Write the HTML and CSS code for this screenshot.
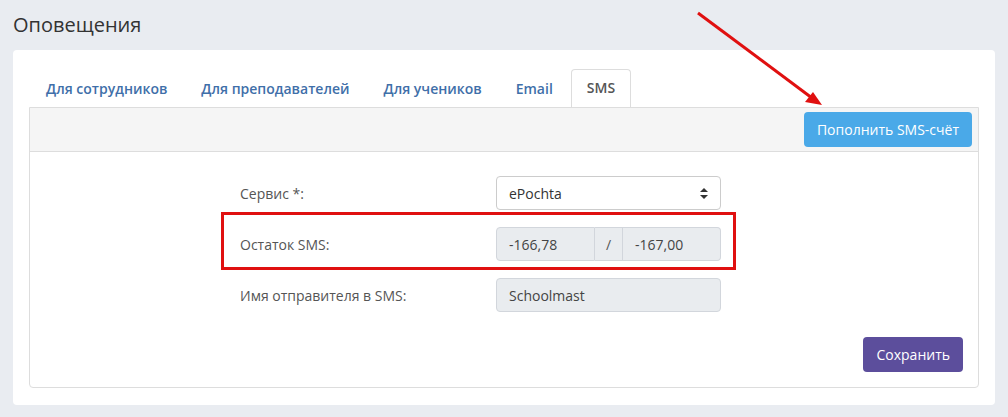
FILE: index.html
```html
<!DOCTYPE html>
<html lang="ru">
<head>
  <meta charset="UTF-8">
  <title>Оповещения</title>
  <link rel="stylesheet" href="styles.css">
</head>
<body>
  <div class="page">
    <h1 class="page-title">Оповещения</h1>
    <div class="card">
      <ul class="tabs">
        <li class="tab">Для сотрудников</li>
        <li class="tab">Для преподавателей</li>
        <li class="tab">Для учеников</li>
        <li class="tab">Email</li>
        <li class="tab active">SMS</li>
      </ul>
      <div class="panel">
        <div class="toolbar">
          <button class="btn btn-blue">Пополнить SMS-счёт</button>
        </div>
        <div class="form">
          <div class="form-row">
            <label class="form-label">Сервис *:</label>
            <div class="select">
              <span>ePochta</span>
              <svg class="select-arrow" width="8" height="11" viewBox="0 0 8 11">
                <path d="M4 0 L8 4 L0 4 Z M0 7 L8 7 L4 11 Z" fill="#333"/>
              </svg>
            </div>
          </div>
          <div class="form-row">
            <label class="form-label">Остаток SMS:</label>
            <div class="input-group">
              <div class="input readonly first">-166,78</div>
              <div class="addon">/</div>
              <div class="input readonly last">-167,00</div>
            </div>
          </div>
          <div class="form-row">
            <label class="form-label">Имя отправителя в SMS:</label>
            <div class="input readonly">Schoolmast</div>
          </div>
        </div>
        <div class="panel-footer">
          <button class="btn btn-purple">Сохранить</button>
        </div>
      </div>
    </div>

    <!-- пометки поверх скриншота -->
    <div class="mark-box"></div>
    <svg class="mark-arrow" width="1008" height="417" viewBox="0 0 1008 417">
      <line x1="698" y1="13" x2="812" y2="98" stroke="#e01010" stroke-width="3"/>
      <path d="M822 105 L805 102 L813 92 Z" fill="#e01010"/>
    </svg>
  </div>
</body>
</html>
```

FILE: styles.css
```css
body {
  margin: 0;
  padding: 0;
  font-family: "Open Sans", "Liberation Sans", sans-serif;
  background-color: #e9ecf1;
  color: #555;
}
.page {
  position: relative;
  width: 1008px;
  height: 417px;
  padding: 0 13px 13px;
  box-sizing: border-box;
}
.page-title {
  margin: 0;
  height: 50px;
  line-height: 50px;
  font-size: 20px;
  font-weight: 400;
  color: #333;
}
.card {
  background: #fff;
  border-radius: 4px;
  padding: 19px 16px 17px;
}
.tabs {
  list-style: none;
  margin: 0;
  padding: 0 0 0 1px;
  display: flex;
  gap: 2px;
  height: 38px;
}
.tab {
  padding: 0 15px;
  line-height: 38px;
  font-size: 14px;
  font-weight: 600;
  color: #3f6fa9;
  border: 1px solid transparent;
  border-bottom: none;
  border-radius: 4px 4px 0 0;
}
.tab.active {
  color: #555;
  border-color: #ddd;
  background: #fff;
  line-height: 36px;
}
.panel {
  border: 1px solid #ddd;
  border-radius: 0 0 4px 4px;
}
.toolbar {
  display: flex;
  justify-content: flex-end;
  padding: 4px 6px 4px;
  background: #f5f5f5;
  border-bottom: 1px solid #ddd;
}
.btn {
  border: none;
  border-radius: 4px;
  height: 35px;
  padding: 0 13px;
  font-family: inherit;
  font-size: 14px;
  color: #fff;
  cursor: pointer;
}
.btn-blue {
  background: #4aa9e8;
}
.btn-purple {
  background: #5c4e9c;
}
.form {
  padding: 24px 0 0 210px;
  display: flex;
  flex-direction: column;
  gap: 17px;
}
.form-row {
  display: flex;
  align-items: center;
  height: 34px;
}
.form-label {
  width: 256px;
  font-size: 14px;
  color: #555;
}
.select, .input, .input-group {
  width: 225px;
  height: 34px;
  box-sizing: border-box;
}
.select {
  display: flex;
  align-items: center;
  justify-content: space-between;
  padding: 0 12px;
  border: 1px solid #ccc;
  border-radius: 4px;
  font-size: 14px;
  color: #333;
}
.select-arrow {
  margin-top: 1px;
}
.input {
  display: flex;
  align-items: center;
  padding: 0 12px;
  border: 1px solid #d2d6dc;
  border-radius: 4px;
  font-size: 14px;
  color: #444;
}
.input.readonly {
  background: #e9ecef;
}
.input-group {
  display: flex;
}
.input-group .input {
  width: auto;
  flex: 1;
}
.input-group .first {
  border-radius: 4px 0 0 4px;
  width: 99px;
  flex: none;
}
.input-group .last {
  border-radius: 0 4px 4px 0;
  border-left: none;
}
.addon {
  width: 27px;
  display: flex;
  align-items: center;
  justify-content: center;
  background: #e9ecef;
  border: 1px solid #d2d6dc;
  border-left: none;
  font-size: 14px;
  color: #555;
}
.panel-footer {
  display: flex;
  justify-content: flex-end;
  padding: 25px 15px 15px;
}
.mark-box {
  position: absolute;
  left: 221px;
  top: 212px;
  width: 515px;
  height: 58px;
  border: 3px solid #e01010;
  box-sizing: border-box;
}
.mark-arrow {
  position: absolute;
  left: 0;
  top: 0;
  pointer-events: none;
}
```
